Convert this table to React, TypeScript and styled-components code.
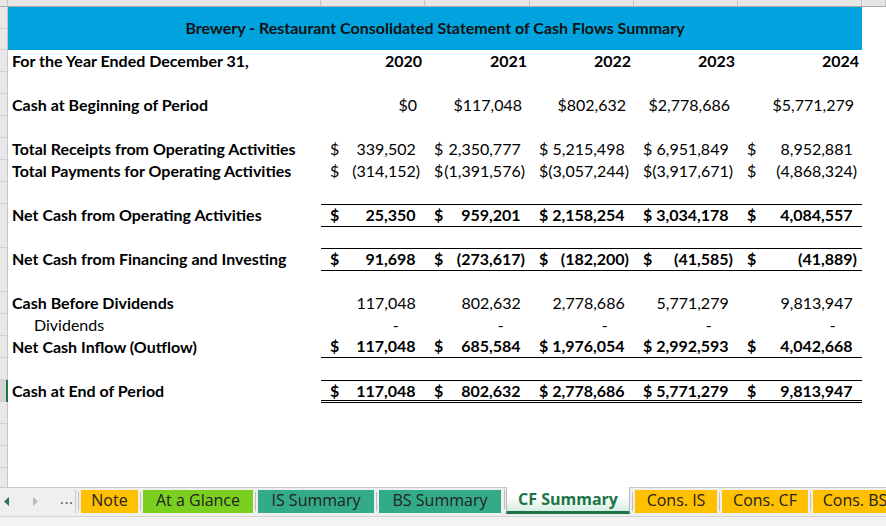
import React from "react";
import styled, { createGlobalStyle, css } from "styled-components";

const GlobalStyle = createGlobalStyle`
  html, body {
    margin: 0;
    padding: 0;
    background: #fff;
    overflow: hidden;
  }
  * {
    box-sizing: border-box;
  }
`;

const COLS = "8px 313px 104px 105px 104px 104px 124px 1fr";

const Page = styled.div`
  width: 886px;
  height: 526px;
  display: flex;
  flex-direction: column;
  font-family: Lato, "Liberation Sans", sans-serif;
  color: #000;
  overflow: hidden;
`;

const ColumnStrip = styled.div`
  display: grid;
  grid-template-columns: ${COLS};
  height: 7px;
  flex: none;
`;

const ColumnHead = styled.div`
  background: #e6e6e6;
  border-right: 1px solid #c4c4c4;
  border-bottom: 1px solid #ababab;
`;

const SheetBody = styled.div`
  height: 480px;
  flex: none;
  overflow: hidden;
`;

const Row = styled.div<{ $h?: number }>`
  display: grid;
  grid-template-columns: ${COLS};
  height: ${(p) => p.$h ?? 22}px;
  font-size: 16px;
`;

const Gutter = styled.div<{ $active?: boolean; $split?: boolean }>`
  position: relative;
  background: #e9e9e9;
  border-right: 1px solid #c6c6c6;
  border-bottom: 1px solid #d2d2d2;
  ${(p) =>
    p.$active &&
    css`
      border-right: 2px solid #217346;
      background: #d3d3d3;
    `}
  ${(p) =>
    p.$split &&
    css`
      &::after {
        content: "";
        position: absolute;
        left: 0;
        right: 0;
        top: 21px;
        border-top: 1px solid #d2d2d2;
      }
    `}
`;

const Banner = styled.div`
  grid-column: 2 / 8;
  background: #00a3dd;
  display: flex;
  align-items: center;
  justify-content: center;
  font-weight: 700;
  font-size: 16px;
  color: #111;
  padding-bottom: 2px;
`;

const Label = styled.div<{ $bold?: boolean; $indent?: boolean }>`
  display: flex;
  align-items: center;
  padding-left: ${(p) => (p.$indent ? 26 : 4)}px;
  padding-bottom: 2px;
  font-weight: ${(p) => (p.$bold ? 700 : 400)};
  white-space: nowrap;
`;

type Rule = "none" | "box" | "bottom" | "total";

const Value = styled.div<{ $bold?: boolean; $rule: Rule; $pr: number }>`
  display: flex;
  align-items: center;
  justify-content: space-between;
  padding: 0 ${(p) => p.$pr}px 2px 9px;
  font-weight: ${(p) => (p.$bold ? 700 : 400)};
  white-space: nowrap;
  ${(p) =>
    (p.$rule === "box" || p.$rule === "total") &&
    css`
      border-top: 1px solid #000;
    `}
  ${(p) =>
    (p.$rule === "box" || p.$rule === "bottom") &&
    css`
      border-bottom: 1px solid #000;
    `}
  ${(p) =>
    p.$rule === "total" &&
    css`
      border-bottom: 3px double #000;
      padding-bottom: 0;
    `}
`;

const Ghost = styled.span`
  visibility: hidden;
`;

const Dash = styled.span`
  margin-right: 17px;
`;

type Kind = "year" | "currency" | "acct" | "plain" | "dash";

interface LineItem {
  label?: string;
  kind?: Kind;
  values?: string[];
  bold?: boolean;
  labelBold?: boolean;
  indent?: boolean;
  rule?: Rule;
  active?: boolean;
}

const lines: LineItem[] = [
  {
    label: "For the Year Ended December 31,",
    kind: "year",
    values: ["2020", "2021", "2022", "2023", "2024"],
    bold: true,
    labelBold: true,
  },
  {},
  {
    label: "Cash at Beginning of Period",
    kind: "currency",
    values: ["$0", "$117,048", "$802,632", "$2,778,686", "$5,771,279"],
    labelBold: true,
  },
  {},
  {
    label: "Total Receipts from Operating Activities",
    kind: "acct",
    values: ["339,502", "2,350,777", "5,215,498", "6,951,849", "8,952,881"],
    labelBold: true,
  },
  {
    label: "Total Payments for Operating Activities",
    kind: "acct",
    values: ["(314,152)", "(1,391,576)", "(3,057,244)", "(3,917,671)", "(4,868,324)"],
    labelBold: true,
  },
  {},
  {
    label: "Net Cash from Operating Activities",
    kind: "acct",
    values: ["25,350", "959,201", "2,158,254", "3,034,178", "4,084,557"],
    bold: true,
    labelBold: true,
    rule: "box",
  },
  {},
  {
    label: "Net Cash from Financing and Investing",
    kind: "acct",
    values: ["91,698", "(273,617)", "(182,200)", "(41,585)", "(41,889)"],
    bold: true,
    labelBold: true,
    rule: "box",
  },
  {},
  {
    label: "Cash Before Dividends",
    kind: "plain",
    values: ["117,048", "802,632", "2,778,686", "5,771,279", "9,813,947"],
    labelBold: true,
  },
  {
    label: "Dividends",
    kind: "dash",
    values: ["-", "-", "-", "-", "-"],
    indent: true,
  },
  {
    label: "Net Cash Inflow (Outflow)",
    kind: "acct",
    values: ["117,048", "685,584", "1,976,054", "2,992,593", "4,042,668"],
    bold: true,
    labelBold: true,
    rule: "bottom",
  },
  {},
  {
    label: "Cash at End of Period",
    kind: "acct",
    values: ["117,048", "802,632", "2,778,686", "5,771,279", "9,813,947"],
    bold: true,
    labelBold: true,
    rule: "total",
    active: true,
  },
  {},
  {},
  {},
  {},
];

function renderValue(kind: Kind, v: string) {
  const neg = v.startsWith("(");
  const tail = neg ? null : <Ghost>)</Ghost>;
  switch (kind) {
    case "year":
    case "currency":
      return (
        <>
          <span />
          <span>{v}</span>
        </>
      );
    case "acct":
      return (
        <>
          <span>$</span>
          <span>
            {v}
            {tail}
          </span>
        </>
      );
    case "plain":
      return (
        <>
          <span />
          <span>
            {v}
            {tail}
          </span>
        </>
      );
    case "dash":
      return (
        <>
          <span />
          <span>
            <Dash>-</Dash>
            <Ghost>)</Ghost>
          </span>
        </>
      );
  }
}

const padFor: Record<Kind, number> = {
  year: 3,
  currency: 8,
  acct: 5,
  plain: 5,
  dash: 5,
};

const SheetRow: React.FC<{ item: LineItem }> = ({ item }) => {
  const kind = item.kind;
  return (
    <Row>
      <Gutter $active={item.active} />
      <Label $bold={item.labelBold} $indent={item.indent}>
        {item.label}
      </Label>
      {[0, 1, 2, 3, 4].map((i) => (
        <Value key={i} $bold={item.bold} $rule={item.rule ?? "none"} $pr={kind ? padFor[kind] : 5}>
          {kind && item.values ? renderValue(kind, item.values[i]) : null}
        </Value>
      ))}
      <div />
    </Row>
  );
};

/* sheet tabs */

const TabBar = styled.div`
  flex: none;
  height: 29px;
  background: #efefef;
  border-top: 1px solid #c8c8c8;
  display: flex;
  align-items: flex-start;
  padding-top: 2px;
  font-family: "Open Sans", "Noto Sans", sans-serif;
  font-size: 16px;
  line-height: 18px;
`;

const Nav = styled.div`
  width: 76px;
  height: 23px;
  display: flex;
  align-items: center;
  flex: none;
  border-right: 1px solid #c8c8c8;
`;

const NavBtn = styled.span<{ $x: number }>`
  display: inline-flex;
  margin-left: ${(p) => p.$x}px;
`;

const Ellipsis = styled.span`
  margin-left: 22px;
  color: #444;
  font-size: 14px;
  letter-spacing: 1px;
  padding-bottom: 5px;
`;

const Tab = styled.div<{ $bg: string; $w: number; $active?: boolean }>`
  flex: none;
  width: ${(p) => p.$w}px;
  height: 23px;
  margin-left: 5px;
  background: ${(p) => p.$bg};
  color: #222;
  display: flex;
  align-items: center;
  justify-content: center;
  padding-bottom: 3px;
  white-space: nowrap;
  position: relative;
  &::before {
    content: "";
    position: absolute;
    left: -3px;
    top: 2px;
    bottom: 2px;
    border-left: 1px solid #c0c0c0;
  }
  ${(p) =>
    p.$active &&
    css`
      margin-top: -3px;
      height: 27px;
      padding-bottom: 0;
      background: linear-gradient(#ffffff 40%, #d4eee2);
      border: 1px solid #b8b8b8;
      border-top: none;
      border-bottom: 3px solid #217346;
      color: #217346;
      font-weight: 700;
    `}
`;

const StatusBar = styled.div`
  flex: 1;
  background: #f3f3f3;
  border-top: 1px solid #d4d4d4;
`;

const tabs = [
  { name: "Note", bg: "#ffc000", w: 57 },
  { name: "At a Glance", bg: "#7acf1f", w: 110 },
  { name: "IS Summary", bg: "#33aa88", w: 116 },
  { name: "BS Summary", bg: "#33aa88", w: 122 },
  { name: "CF Summary", bg: "#fff", w: 124, active: true },
  { name: "Cons. IS", bg: "#ffc000", w: 82 },
  { name: "Cons. CF", bg: "#ffc000", w: 86 },
  { name: "Cons. BS", bg: "#ffc000", w: 84 },
];

export default function App() {
  return (
    <Page>
      <GlobalStyle />
      <ColumnStrip>
        {Array.from({ length: 8 }).map((_, i) => (
          <ColumnHead key={i} />
        ))}
      </ColumnStrip>
      <SheetBody>
        <Row $h={43}>
          <Gutter $split />
          <Banner>Brewery - Restaurant Consolidated Statement of Cash Flows Summary</Banner>
          <div />
        </Row>
        {lines.map((item, i) => (
          <SheetRow key={i} item={item} />
        ))}
      </SheetBody>
      <TabBar>
        <Nav>
          <NavBtn $x={4}>
            <svg width="5" height="9" viewBox="0 0 5 9">
              <path d="M5 0 L0 4.5 L5 9 Z" fill="#2d6f57" />
            </svg>
          </NavBtn>
          <NavBtn $x={24}>
            <svg width="5" height="9" viewBox="0 0 5 9">
              <path d="M0 0 L5 4.5 L0 9 Z" fill="#b9b9b9" />
            </svg>
          </NavBtn>
          <Ellipsis>...</Ellipsis>
        </Nav>
        {tabs.map((t) => (
          <Tab key={t.name} $bg={t.bg} $w={t.w} $active={t.active}>
            {t.name}
          </Tab>
        ))}
      </TabBar>
      <StatusBar />
    </Page>
  );
}
